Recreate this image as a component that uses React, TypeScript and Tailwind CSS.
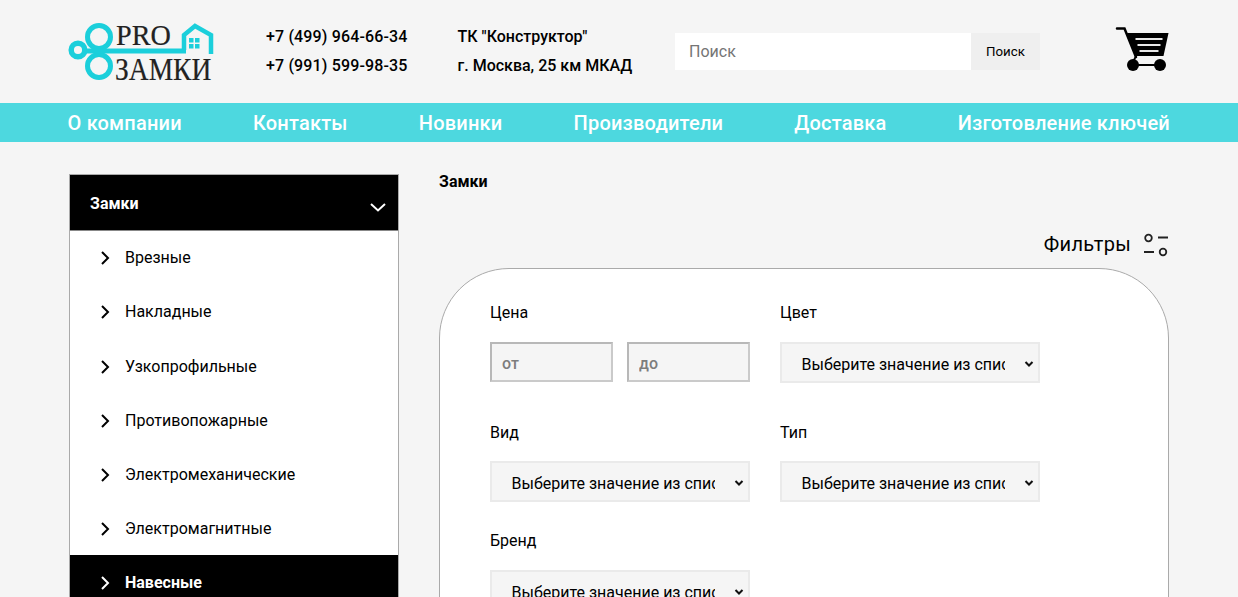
const navLinks = ["О компании", "Контакты", "Новинки", "Производители", "Доставка", "Изготовление ключей"];
const categories = ["Врезные", "Накладные", "Узкопрофильные", "Противопожарные", "Электромеханические", "Электромагнитные", "Навесные"];

function Logo() {
  return (
    <svg width="146" height="80" viewBox="68 10 146 80" className="shrink-0">
      <g fill="none" stroke="#1bcfdb">
        <circle cx="99" cy="35" r="11.500" strokeWidth="5" />
        <circle cx="99" cy="64" r="11.500" strokeWidth="5" />
        <circle cx="78" cy="48" r="6.800" strokeWidth="5.500" />
        <path d="M86 49h100" strokeWidth="5" />
        <path d="M184 48V33l11-9 16 9v19" strokeWidth="4.500" />
      </g>
      <g fill="#1bcfdb">
        <rect x="189" y="36" width="4.500" height="4.500" />
        <rect x="195" y="36" width="4.500" height="4.500" />
        <rect x="189" y="42" width="4.500" height="4.500" />
        <rect x="195" y="42" width="4.500" height="4.500" />
      </g>
      <text transform="translate(116 43) scale(0.94 1)" className="fill-[#222]" stroke="#222" strokeWidth="0.200" style={{ fontFamily: "'Liberation Serif', serif", fontSize: 30 }}>PRO</text>
      <text transform="translate(115 78) scale(0.86 1)" className="fill-[#222]" stroke="#222" strokeWidth="0.200" style={{ fontFamily: "'Liberation Serif', serif", fontSize: 32 }}>ЗАМКИ</text>
    </svg>
  );
}

function Cart() {
  return (
    <svg width="54" height="46" viewBox="0 0 54 46" className="shrink-0">
      <path d="M2 2.500h7.500L21 31" fill="none" stroke="#000" strokeWidth="2.500" strokeLinecap="round" />
      <path d="M12 7h41.500L48.500 30H20Z" fill="#000" />
      <path d="M20.500 13h27M22.500 19h23M24.500 25h19" stroke="#e8e8e8" strokeWidth="2.200" />
      <circle cx="18" cy="39" r="6" fill="#000" />
      <circle cx="45" cy="39" r="6" fill="#000" />
      <path d="M20 39h23M21 30l-3 6" stroke="#000" strokeWidth="1.800" />
    </svg>
  );
}

function FilterIcon() {
  return (
    <svg width="26" height="26" viewBox="0 0 26 26" fill="none" stroke="#222" strokeWidth="1.800">
      <circle cx="5.500" cy="7" r="3.300" />
      <path d="M15 6.500h10M1 21h10" />
      <circle cx="20" cy="21" r="3.300" />
    </svg>
  );
}

function Chevron({ down, className }: { down?: boolean; className?: string }) {
  return (
    <svg width="16" height="14" viewBox="0 0 16 14" fill="none" stroke="currentColor" strokeWidth="2" className={className}>
      {down ? <path d="M1 4l7 6.500 7-6.500" /> : <path d="M3 1l6 6-6 6" />}
    </svg>
  );
}

function FilterSelect() {
  return (
    <div className="relative w-[260px] h-[41px]">
      <select className="appearance-none w-full h-full bg-[#f5f5f5] border-2 border-[#eaeaea] pl-[19.500px] pr-[33px] pt-[4px] text-[16px] font-normal text-black">
        <option>Выберите значение из списка</option>
      </select>
      <svg width="10" height="6" viewBox="0 0 10 6" fill="none" stroke="#111" strokeWidth="2" className="absolute right-[6px] top-[19px] pointer-events-none">
        <path d="M1.500 1l3.500 3.500L8.500 1" />
      </svg>
    </div>
  );
}

function PriceInput({ placeholder }: { placeholder: string }) {
  return (
    <input
      placeholder={placeholder}
      className="w-[123px] h-10 bg-[#f5f5f5] border-2 border-t-[#b8b8b8] border-l-[#b8b8b8] border-r-[#cacaca] border-b-[#cacaca] px-[10px] pt-[3px] text-[16px] font-medium placeholder:text-[#7d7d7d]"
    />
  );
}

export default function App() {
  return (
    <div className="h-[597px] overflow-hidden bg-[#f5f5f5] text-black" style={{ fontFamily: "Roboto, sans-serif" }}>
      <header className="h-[103px] flex items-center pl-[68px] pr-[69px]">
        <Logo />
        <div className="ml-[52px] w-[191.500px] text-[16px] font-medium leading-[29px] tracking-[0.15px] -mt-[1px]">
          <div>+7 (499) 964-66-34</div>
          <div>+7 (991) 599-98-35</div>
        </div>
        <div className="w-[217.500px] text-[16px] font-medium leading-[29px] -mt-[1px]">
          <div>ТК "Конструктор"</div>
          <div>г. Москва, 25 км МКАД</div>
        </div>
        <div className="flex">
          <input placeholder="Поиск" className="w-[296px] h-[37px] bg-white pl-[14px] text-[16px] placeholder:text-[#757575] outline-none" />
          <button className="w-[69px] h-[37px] bg-[#efefef] text-[13.300px]">Поиск</button>
        </div>
        <div className="ml-auto -mt-[5px]">
          <Cart />
        </div>
      </header>

      <nav className="h-[39px] bg-[#4dd8df] flex items-center justify-between pl-[67.500px] pr-[68px] text-white text-[20px] font-medium tracking-[0.2px]">
        {navLinks.map((link) => (
          <a key={link}>{link}</a>
        ))}
      </nav>

      <div className="flex items-start gap-10 pl-[69px] pr-[69px] pt-[32px]">
        <aside className="w-[330px] shrink-0 border border-[#aaa] bg-white">
          <div className="h-[56.200px] bg-black text-white flex items-center justify-between pl-5 pr-3 text-[16px] font-bold border-b border-[#888]">
            <span className="mt-[2px]">Замки</span>
            <Chevron down className="mt-2" />
          </div>
          {categories.map((name) => {
            const active = name === "Навесные";
            return (
              <div key={name} className={`flex items-center pl-[29px] gap-[10px] text-[16px] ${active ? "-mt-[1px] h-[55.200px] bg-black text-white font-bold" : "h-[54.200px] font-normal"}`}>
                <Chevron />
                <span>{name}</span>
              </div>
            );
          })}
        </aside>

        <main className="flex-1">
          <h1 className="mt-[2px] text-[16px] font-bold leading-[12px]">Замки</h1>
          <div className="flex items-center justify-end gap-[12px] mt-[43px] text-[20px] leading-6 tracking-[0.3px]">
            <span>Фильтры</span>
            <FilterIcon />
          </div>
          <div className="mt-[11px] h-[500px] bg-white border border-[#aaa] rounded-[70px] pl-[50px] pt-[34px]">
            <div className="grid grid-cols-[260px_260px] gap-x-[30px] text-[16px] font-normal">
              <div className="h-[120px]">
                <div className="leading-5 mb-[19px]">Цена</div>
                <div className="flex gap-[14px]">
                  <PriceInput placeholder="от" />
                  <PriceInput placeholder="до" />
                </div>
              </div>
              <div className="h-[120px]">
                <div className="leading-5 mb-[19px]">Цвет</div>
                <FilterSelect />
              </div>
              <div className="h-[108px]">
                <div className="leading-5 mb-[18px]">Вид</div>
                <FilterSelect />
              </div>
              <div className="h-[108px]">
                <div className="leading-5 mb-[18px]">Тип</div>
                <FilterSelect />
              </div>
              <div>
                <div className="leading-5 mb-[19px]">Бренд</div>
                <FilterSelect />
              </div>
            </div>
          </div>
        </main>
      </div>
    </div>
  );
}
